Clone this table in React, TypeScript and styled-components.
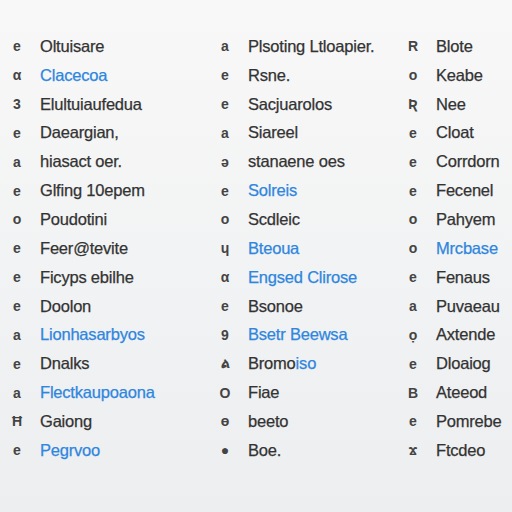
import React from 'react'
import styled, { createGlobalStyle } from 'styled-components'

const GlobalStyle = createGlobalStyle`
  html, body {
    margin: 0;
    padding: 0;
    width: 512px;
    height: 512px;
    overflow: hidden;
  }
  body {
    background: linear-gradient(180deg, #f8f8f8 0%, #f1f2f3 60%, #edeef0 100%);
    font-family: 'Liberation Sans', Arial, sans-serif;
  }
`

const Sheet = styled.div`
  width: 512px;
  height: 512px;
  padding-top: 32px;
  box-sizing: border-box;
  display: grid;
  grid-template-columns: 208px 188px 116px;
  overflow: hidden;
`

const Column = styled.div`
  display: flex;
  flex-direction: column;
  min-width: 0;
`

const Row = styled.div`
  height: 28.85px;
  display: grid;
  grid-template-columns: 40px 1fr;
  align-items: center;
  white-space: nowrap;
`

const Marker = styled.span`
  justify-self: center;
  margin-left: -6px;
  font-size: 14px;
  font-weight: 700;
  color: #444;
`

const Label = styled.span<{ $blue?: boolean }>`
  font-size: 16.5px;
  letter-spacing: -0.2px;
  color: ${(p) => (p.$blue ? '#2e86de' : '#333')};
  font-weight: 400;
  -webkit-text-stroke: 0.25px currentColor;
`

const Tail = styled.span`
  color: #2e86de;
`

type Item = { m: string; t: string; blue?: boolean; tail?: string }

const columns: Item[][] = [
  [
    { m: 'e', t: 'Oltuisare' },
    { m: 'α', t: 'Clacecoa', blue: true },
    { m: '3', t: 'Elultuiaufedua' },
    { m: 'e', t: 'Daeargian,' },
    { m: 'a', t: 'hiasact oer.' },
    { m: 'e', t: 'Glfing 10epem' },
    { m: 'o', t: 'Poudotini' },
    { m: 'e', t: 'Feer@tevite' },
    { m: 'e', t: 'Ficyps ebilhe' },
    { m: 'e', t: 'Doolon' },
    { m: 'a', t: 'Lionhasarbyos', blue: true },
    { m: 'e', t: 'Dnalks' },
    { m: 'a', t: 'Flectkaupoaona', blue: true },
    { m: 'Ħ', t: 'Gaiong' },
    { m: 'e', t: 'Pegrvoo', blue: true },
  ],
  [
    { m: 'a', t: 'Plsoting Ltloapier.' },
    { m: 'e', t: 'Rsne.' },
    { m: 'e', t: 'Sacjuarolos' },
    { m: 'a', t: 'Siareel' },
    { m: 'ə', t: 'stanaene oes' },
    { m: 'e', t: 'Solreis', blue: true },
    { m: 'o', t: 'Scdleic' },
    { m: 'ɥ', t: 'Bteoua', blue: true },
    { m: 'α', t: 'Engsed Clirose', blue: true },
    { m: 'e', t: 'Bsonoe' },
    { m: '9', t: 'Bsetr Beewsa', blue: true },
    { m: 'ል', t: 'Bromo', tail: 'iso' },
    { m: 'O', t: 'Fiae' },
    { m: 'ɵ', t: 'beeto' },
    { m: '●', t: 'Boe.' },
  ],
  [
    { m: 'R', t: 'Blote' },
    { m: 'o', t: 'Keabe' },
    { m: 'Ʀ', t: 'Nee' },
    { m: 'e', t: 'Cloat' },
    { m: 'e', t: 'Corrdorn' },
    { m: 'e', t: 'Fecenel' },
    { m: 'o', t: 'Pahyem' },
    { m: 'o', t: 'Mrcbase', blue: true },
    { m: 'e', t: 'Fenaus' },
    { m: 'a', t: 'Puvaeau' },
    { m: 'ọ', t: 'Axtende' },
    { m: 'e', t: 'Dloaiog' },
    { m: 'B', t: 'Ateeod' },
    { m: 'e', t: 'Pomrebe' },
    { m: 'ϫ', t: 'Ftcdeo' },
  ],
]

export default function App() {
  return (
    <>
      <GlobalStyle />
      <Sheet>
        {columns.map((col, ci) => (
          <Column key={ci}>
            {col.map((it, i) => (
              <Row key={i}>
                <Marker>{it.m}</Marker>
                <Label $blue={it.blue}>
                  {it.t}
                  {it.tail && <Tail>{it.tail}</Tail>}
                </Label>
              </Row>
            ))}
          </Column>
        ))}
      </Sheet>
    </>
  )
}
